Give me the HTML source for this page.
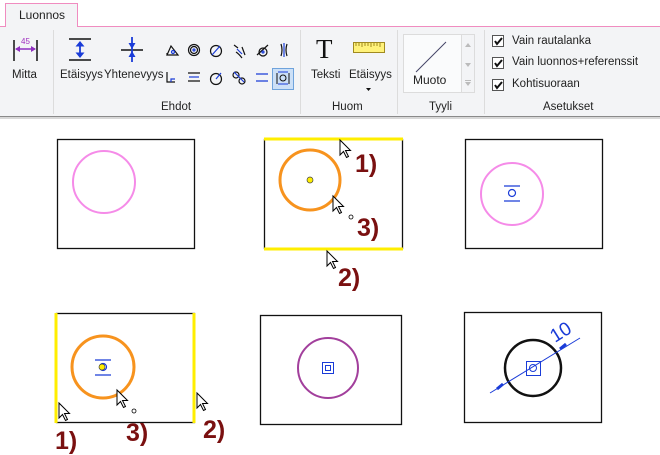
<!DOCTYPE html>
<html><head><meta charset="utf-8"><style>
*{margin:0;padding:0;box-sizing:border-box}
body{width:660px;height:455px;background:#fff;position:relative;overflow:hidden;font-family:"Liberation Sans",sans-serif;font-size:11.5px;color:#222}
.a{position:absolute;white-space:nowrap}
</style></head><body>
<div class="a" style="left:0;top:26px;width:660px;height:1px;background:#f08cc0"></div>
<div class="a" style="left:5px;top:3px;width:73px;height:24px;background:#f3f4f6;border:1px solid #f08cc0;border-bottom:none"></div>
<div class="a" style="left:19px;top:8px;font-size:12px">Luonnos</div>
<div class="a" style="left:0;top:27px;width:660px;height:90px;background:#f3f4f6;border-bottom:1px solid #8a8a8a"></div>
<div class="a" style="left:0;top:117px;width:660px;height:2px;background:#d8d8d8"></div>
<div class="a" style="left:53px;top:30px;width:1px;height:84px;background:#dcdcdc"></div>
<div class="a" style="left:300px;top:30px;width:1px;height:84px;background:#dcdcdc"></div>
<div class="a" style="left:397px;top:30px;width:1px;height:84px;background:#dcdcdc"></div>
<div class="a" style="left:484px;top:30px;width:1px;height:84px;background:#dcdcdc"></div>
<div class="a" style="left:12px;top:69px">Mitta</div>
<div class="a" style="left:60px;top:69px">Etäisyys</div>
<div class="a" style="left:104px;top:69px">Yhtenevyys</div>
<div class="a" style="left:161px;top:101px">Ehdot</div>
<div class="a" style="left:311px;top:69px">Teksti</div>
<div class="a" style="left:349px;top:69px">Etäisyys</div>
<div class="a" style="left:332px;top:101px">Huom</div>
<div class="a" style="left:429px;top:101px">Tyyli</div>
<div class="a" style="left:543px;top:101px">Asetukset</div>
<div class="a" style="left:403px;top:34px;width:59px;height:59px;background:#fafbfc;border:1px solid #dcdcdc"></div>
<div class="a" style="left:462px;top:34px;width:13px;height:59px;background:#f3f4f6;border:1px solid #dcdcdc;border-left:none"></div>
<div class="a" style="left:413px;top:73px;font-size:12px">Muoto</div>
<div class="a" style="left:512px;top:35px">Vain rautalanka</div>
<div class="a" style="left:512px;top:56px">Vain luonnos+referenssit</div>
<div class="a" style="left:512px;top:78px">Kohtisuoraan</div>
<svg class="a" style="left:0;top:0" width="660" height="120">
<g fill="#fff" stroke="#555"><rect x="492.5" y="35.5" width="11" height="11"/><rect x="492.5" y="57.5" width="11" height="11"/><rect x="492.5" y="79.5" width="11" height="11"/></g>
<g fill="none" stroke="#111" stroke-width="2"><path d="M495 41l2 3 5-6M495 63l2 3 5-6M495 85l2 3 5-6"/></g>
<line x1="416" y1="72" x2="446" y2="42" stroke="#446" stroke-width="1"/>
<g fill="#bbb"><path d="M465 47l3-4 3 4zM465 63l3 4 3-4zM465 80h6v1h-6zM465 82l3 4 3-4z"/></g>
<text x="21" y="44" font-size="8" fill="#a030c0" font-family="Liberation Sans">45</text>
<g stroke="#111" stroke-width="1.5"><line x1="14" y1="40" x2="14" y2="61"/><line x1="37" y1="40" x2="37" y2="61"/></g>
<g stroke="#9030c0" stroke-width="1.5"><line x1="16" y1="49" x2="35" y2="49"/></g>
<path d="M15 49l5-3v6zM36 49l-5-3v6z" fill="#9030c0"/>
<g stroke="#111" stroke-width="1.5"><line x1="69" y1="39" x2="91" y2="39"/><line x1="69" y1="60" x2="91" y2="60"/><line x1="121" y1="50" x2="143" y2="50"/></g>
<g stroke="#1a3cd8" stroke-width="1.8"><line x1="80" y1="42" x2="80" y2="57"/><line x1="132" y1="37" x2="132" y2="62"/></g>
<path d="M80 41l-4.5 5.5h9zM80 58l-4.5-5.5h9zM132 49l-3.5-6h7zM132 51l-3.5 6h7z" fill="#1a3cd8"/>
<g fill="none" stroke-width="1.2">
<path d="M167 55h11l-7-9zM167 55v-2" stroke="#111"/><circle cx="173" cy="52" r="1.5" stroke="#1a3cd8"/>
<circle cx="194" cy="50" r="5.5" stroke="#111"/><circle cx="194" cy="50" r="3.5" stroke="#111"/><circle cx="194" cy="50" r="1" stroke="#1a3cd8"/>
<circle cx="216" cy="51" r="5.5" stroke="#111"/><line x1="212" y1="55" x2="220" y2="46" stroke="#1a3cd8"/>
<path d="M234 45l4 3M236 52q3 2 6 6M242 47l3 8" stroke="#111"/><path d="M237 49l5 5" stroke="#1a3cd8"/>
<circle cx="263" cy="52" r="4" stroke="#111"/><line x1="257" y1="55" x2="268" y2="45" stroke="#111"/><circle cx="263" cy="52" r="1" stroke="#1a3cd8"/>
<path d="M281 44q2 6 0 12M287 44q-2 6 0 12" stroke="#111"/><line x1="284" y1="43" x2="284" y2="57" stroke="#1a3cd8"/>
<path d="M167 72v10h8" stroke="#111"/><path d="M171 82v-3h4" stroke="#1a3cd8"/>
<path d="M188 73h12M188 81h12" stroke="#111"/><path d="M189 77h10" stroke="#1a3cd8"/>
<circle cx="216" cy="79" r="5.5" stroke="#111"/><path d="M216 79l5-6" stroke="#1a3cd8"/>
<circle cx="236" cy="75" r="3" stroke="#111"/><circle cx="242" cy="81" r="3" stroke="#111"/><path d="M234 72l10 10" stroke="#1a3cd8"/>
<path d="M256 74h12M256 81h12" stroke="#1a3cd8"/>
</g>
<rect x="272.5" y="68.5" width="21" height="21" fill="#cce0f7" stroke="#6fa3dc"/>
<g fill="none" stroke="#111" stroke-width="1"><path d="M277 73v11M289 73v11"/><circle cx="283" cy="78" r="3"/></g>
<path d="M278 84h10M278 72h10" stroke="#1a3cd8"/>
<text x="316" y="58" font-size="27" font-family="Liberation Serif" fill="#111">T</text>
<rect x="353.5" y="42.5" width="31" height="10" fill="#fff27a" stroke="#a08a20"/>
<path d="M356 43v3M359 43v3M362 43v4M365 43v3M368 43v3M371 43v4M374 43v3M377 43v3M380 43v4" stroke="#a08a20"/>
<path d="M366 88h5l-2.5 3z" fill="#111"/>
</svg>
<svg class="a" style="left:0;top:120px" width="660" height="335" viewBox="0 120 660 335">
<defs><g id="cur"><path d="M0 0v15l3.5-3.5 3 6 2-1-3-6h5z" fill="#fff" stroke="#000" stroke-width="1"/></g></defs>
<g fill="none" stroke="#111" stroke-width="1.3">
<rect x="57.5" y="139.5" width="137" height="109"/>
<rect x="264.5" y="139.5" width="138" height="109"/>
<rect x="465.5" y="139.5" width="137" height="109"/>
<rect x="56.5" y="313.5" width="138" height="109"/>
<rect x="260.5" y="315.5" width="141" height="109"/>
<rect x="464.5" y="312.5" width="137" height="110"/>
</g>
<g stroke="#ffee00" stroke-width="3"><line x1="264" y1="139" x2="403" y2="139"/><line x1="264" y1="249" x2="403" y2="249"/><line x1="56" y1="313" x2="56" y2="423"/><line x1="194" y1="313" x2="194" y2="423"/></g>
<circle cx="104" cy="182" r="31" fill="none" stroke="#f58be8" stroke-width="2"/>
<circle cx="512" cy="194" r="31" fill="none" stroke="#f58be8" stroke-width="2"/>
<g stroke="#1a3cd8" fill="none" stroke-width="1.2"><path d="M504 186h16M504 201h16"/><circle cx="512" cy="193" r="3.5"/></g>
<circle cx="310" cy="180" r="30" fill="none" stroke="#f7931e" stroke-width="3"/>
<circle cx="310" cy="180" r="3" fill="#ffee00" stroke="#444" stroke-width=".7"/>
<circle cx="103" cy="367" r="31" fill="none" stroke="#f7931e" stroke-width="3"/>
<g stroke="#1a3cd8" fill="none" stroke-width="1.2"><path d="M95 360h16M95 375h16"/><circle cx="103" cy="367" r="3.5"/></g>
<circle cx="102" cy="367" r="3" fill="#ffee00" stroke="#444" stroke-width=".7"/>
<circle cx="328" cy="368" r="30" fill="none" stroke="#a23f9c" stroke-width="2"/>
<g stroke="#1a3cd8" fill="none" stroke-width="1"><rect x="322.5" y="362.5" width="11" height="11"/><rect x="325.5" y="365.5" width="5" height="5"/></g>
<circle cx="533" cy="368" r="28" fill="none" stroke="#111" stroke-width="2.5"/>
<g stroke="#1a3cd8" fill="none" stroke-width="1"><line x1="490" y1="393" x2="580" y2="338"/><rect x="526.5" y="361.5" width="14" height="14"/><circle cx="533" cy="368" r="3.5"/>
<path d="M560 349l6-5M497 389l6-5" stroke-width="3"/></g>
<text x="0" y="0" transform="translate(555 343) rotate(-32)" font-size="19" fill="#1a3cd8" font-family="Liberation Sans">10</text>
<circle cx="351" cy="217" r="2" fill="#fff" stroke="#000" stroke-width=".8"/>
<circle cx="134" cy="411" r="2" fill="#fff" stroke="#000" stroke-width=".8"/>
<use href="#cur" x="340" y="140"/><use href="#cur" x="333" y="196"/><use href="#cur" x="327" y="251"/>
<use href="#cur" x="59" y="403"/><use href="#cur" x="117" y="390"/><use href="#cur" x="197" y="393"/>
<g font-family="Liberation Sans" font-weight="bold" font-size="25" fill="#7a1010">
<text x="355" y="172">1)</text><text x="357" y="236">3)</text><text x="338" y="286">2)</text>
<text x="55" y="449">1)</text><text x="126" y="441">3)</text><text x="203" y="438">2)</text>
</g>
</svg>
</body></html>
